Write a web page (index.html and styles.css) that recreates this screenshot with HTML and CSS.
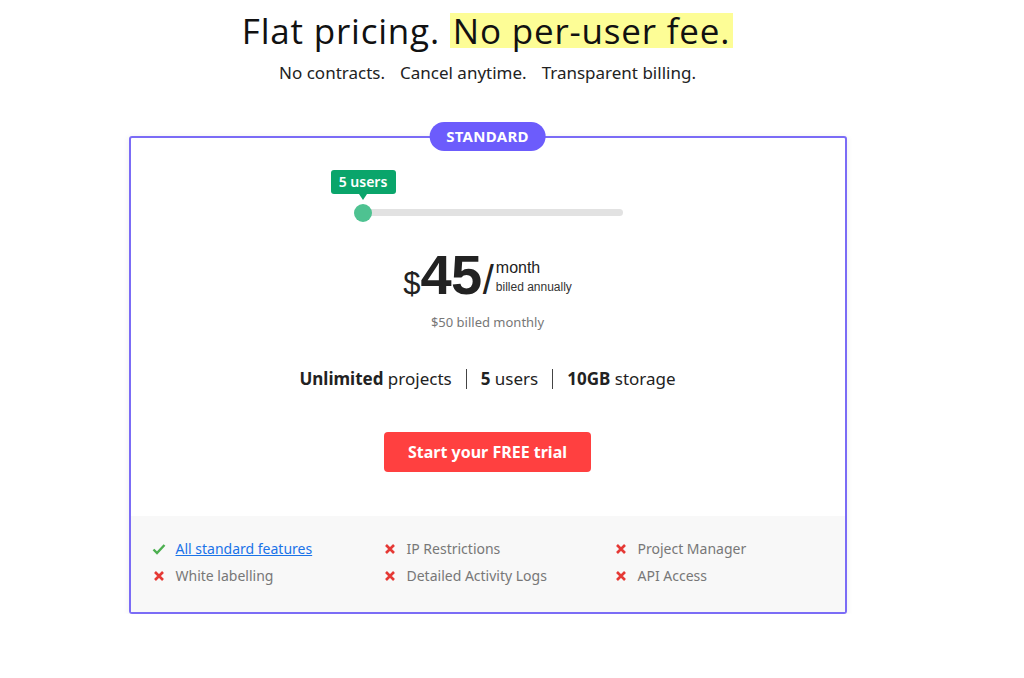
FILE: index.html
```html
<!DOCTYPE html>
<html>
<head>
<meta charset="utf-8">
<link rel="stylesheet" href="styles.css">
</head>
<body>
<div class="page">
  <h1 class="title">Flat pricing. <span class="hl">No per-user fee.</span></h1>
  <p class="sub"><span>No contracts.</span><span>Cancel anytime.</span><span>Transparent billing.</span></p>

  <div class="card">
    <div class="badge">STANDARD</div>
    <div class="slider">
      <div class="track">
        <div class="tip">5 users</div>
        <div class="thumb"></div>
      </div>
    </div>

    <div class="price">
      <span class="cur">$</span>
      <span class="amt">45</span>
      <span class="slash">/</span>
      <div class="per">
        <span class="month">month</span>
        <span class="annual">billed annually</span>
      </div>
    </div>
    <p class="monthly">$50 billed monthly</p>

    <div class="specs">
      <span><b>Unlimited</b> projects</span>
      <i class="sep"></i>
      <span><b>5</b> users</span>
      <i class="sep"></i>
      <span><b>10GB</b> storage</span>
    </div>

    <div class="cta-row"><a class="cta" href="#">Start your FREE trial</a></div>

    <div class="features">
      <div class="feat">
        <svg class="ic" viewBox="0 0 14 14"><path d="M1.5 7.5 L5 11 L12.5 3" fill="none" stroke="#4caf50" stroke-width="2.4"/></svg>
        <a href="#" class="link">All standard features</a>
      </div>
      <div class="feat">
        <svg class="ic" viewBox="0 0 14 14"><path d="M3 3 L11 11 M11 3 L3 11" fill="none" stroke="#e53935" stroke-width="2.6"/></svg>
        <span>IP Restrictions</span>
      </div>
      <div class="feat">
        <svg class="ic" viewBox="0 0 14 14"><path d="M3 3 L11 11 M11 3 L3 11" fill="none" stroke="#e53935" stroke-width="2.6"/></svg>
        <span>Project Manager</span>
      </div>
      <div class="feat">
        <svg class="ic" viewBox="0 0 14 14"><path d="M3 3 L11 11 M11 3 L3 11" fill="none" stroke="#e53935" stroke-width="2.6"/></svg>
        <span>White labelling</span>
      </div>
      <div class="feat">
        <svg class="ic" viewBox="0 0 14 14"><path d="M3 3 L11 11 M11 3 L3 11" fill="none" stroke="#e53935" stroke-width="2.6"/></svg>
        <span>Detailed Activity Logs</span>
      </div>
      <div class="feat">
        <svg class="ic" viewBox="0 0 14 14"><path d="M3 3 L11 11 M11 3 L3 11" fill="none" stroke="#e53935" stroke-width="2.6"/></svg>
        <span>API Access</span>
      </div>
    </div>
  </div>
</div>
</body>
</html>
```

FILE: styles.css
```css
* { box-sizing: border-box; }
html, body { margin: 0; padding: 0; background: #fff; }
body { font-family: "Noto Sans", "Open Sans", sans-serif; color: #222; }

.page { width: 975px; padding-top: 13px; }

.title {
  margin: 0;
  text-align: center;
  font-family: "Open Sans", sans-serif;
  font-weight: 400;
  font-size: 35px;
  line-height: 35px;
  letter-spacing: 0.8px;
  color: #111;
}
.hl { display: inline-block; background: #fdfd96; padding: 0 3px; line-height: 35px; }

.sub {
  margin: 13px 0 0;
  display: flex;
  justify-content: center;
  gap: 15px;
  font-size: 17px;
  line-height: 24px;
  color: #222;
}

.card {
  position: relative;
  width: 718px;
  margin: 51px auto 0;
  border: 2px solid #7b6cf6;
  border-radius: 3px;
  box-shadow: 0 1px 6px rgba(0,0,0,0.08);
  padding-top: 30px;
}

.badge {
  position: absolute;
  top: -16px;
  left: 50%;
  transform: translateX(-50%);
  background: #6c5cfc;
  color: #fff;
  font-weight: 700;
  font-size: 15px;
  line-height: 29px;
  height: 29px;
  padding: 0 17px;
  border-radius: 15px;
  letter-spacing: 0.3px;
}

.slider {
  height: 48px;
  width: 260px;
  margin-left: calc(50% - 125px);
  display: flex;
  flex-direction: column;
  justify-content: flex-end;
}
.track {
  position: relative;
  height: 7px;
  border-radius: 4px;
  background: #e2e2e2;
}
.thumb {
  position: absolute;
  left: -9px;
  top: -5px;
  width: 18px;
  height: 18px;
  border-radius: 50%;
  background: #4ec291;
}
.tip {
  position: absolute;
  left: -32px;
  bottom: 22px;
  width: 65px;
  height: 24px;
  line-height: 24px;
  text-align: center;
  background: #0aa56b;
  color: #fff;
  font-size: 14px;
  font-weight: 600;
  border-radius: 3px;
}
.tip::after {
  content: "";
  position: absolute;
  left: 50%;
  top: 100%;
  margin-left: -4px;
  border: 4px solid transparent;
  border-top: 6px solid #0aa56b;
  border-bottom: 0;
}

.price {
  margin-top: 31px;
  display: flex;
  justify-content: center;
  align-items: baseline;
  font-family: "Liberation Sans", Arial, sans-serif;
  color: #222;
  height: 56px;
}
.cur { font-size: 31px; line-height: 56px; margin-right: 0; }
.amt { font-size: 56px; font-weight: 700; line-height: 56px; letter-spacing: -0.5px; }
.slash { font-size: 40px; line-height: 56px; margin-left: 1px; }
.per {
  align-self: flex-start;
  display: flex;
  flex-direction: column;
  padding-top: 12px;
  margin-left: 2px;
}
.month { font-size: 16px; line-height: 18px; }
.annual { font-size: 12px; line-height: 16px; margin-top: 2px; color: #333; }

.monthly {
  margin: 10px 0 0;
  text-align: center;
  font-size: 13px;
  line-height: 18px;
  color: #777;
}

.specs {
  margin-top: 36px;
  display: flex;
  justify-content: center;
  align-items: center;
  gap: 14px;
  font-size: 17px;
  line-height: 24px;
  color: #222;
}
.specs b { font-weight: 700; }
.sep { display: block; width: 1px; height: 20px; background: #444; }

.cta-row { margin-top: 41px; display: flex; justify-content: center; }
.cta {
  display: block;
  width: 207px;
  height: 40px;
  line-height: 40px;
  text-align: center;
  background: #ff4040;
  color: #fff;
  text-decoration: none;
  font-weight: 700;
  font-size: 16px;
  border-radius: 4px;
}

.features {
  margin-top: 44px;
  background: #f8f8f8;
  padding: 22px 0 25px 21px;
  display: grid;
  grid-template-columns: 231px 231px 231px;
  row-gap: 5px;
  font-size: 14px;
  line-height: 22px;
  color: #777;
}
.feat { display: flex; align-items: center; gap: 10px; }
.ic { width: 14px; height: 14px; flex: none; }
.link { color: #1a73e8; text-decoration: underline; }
```
